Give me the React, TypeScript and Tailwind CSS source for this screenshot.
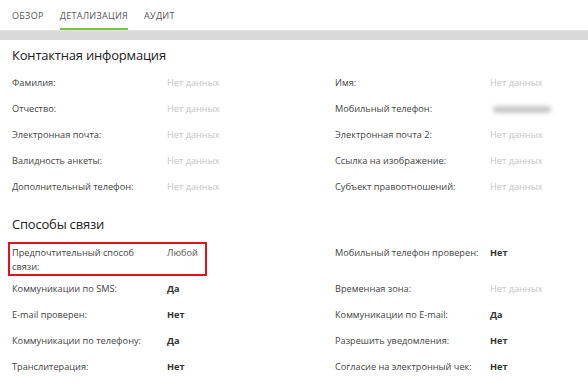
import React from "react";

const F = { fontFamily: '"Open Sans", "Noto Sans", sans-serif' };

type Row = { label: string; value: string; kind?: "empty" | "bold" | "plain" | "blur" };

function Val({ r }: { r: Row }) {
  if (r.kind === "blur")
    return (
      <div className="pt-[1px]">
        <div className="h-[7px] w-[58px] ml-[3px] rounded-full bg-[#c8c8c8] blur-[2px]" />
      </div>
    );
  if (r.kind === "bold") return <span className="font-bold text-[#333]">{r.value}</span>;
  if (r.kind === "plain") return <span className="text-[#555]">{r.value}</span>;
  return <span className="text-[#c4c4c4]">{r.value}</span>;
}

function Cell({ r, boxed }: { r: Row; boxed?: boolean }) {
  return (
    <div
      className={
        "flex text-[9.2px] leading-[14px] " +
        (boxed ? "h-[34px] -ml-[4px] pl-[2px] w-[199px] border-2 border-[#e5101b] pt-[2px]" : "h-[26px] items-center")
      }
    >
      <div className={"shrink-0 w-[155px] text-[#444] " + (boxed ? "pr-[25px]" : "")}>{r.label}</div>
      <div>
        <Val r={r} />
      </div>
    </div>
  );
}

export default function App() {
  const nd = "Нет данных";
  const left1: Row[] = [
    { label: "Фамилия:", value: nd },
    { label: "Отчество:", value: nd },
    { label: "Электронная почта:", value: nd },
    { label: "Валидность анкеты:", value: nd },
    { label: "Дополнительный телефон:", value: nd },
  ];
  const right1: Row[] = [
    { label: "Имя:", value: nd },
    { label: "Мобильный телефон:", value: "", kind: "blur" },
    { label: "Электронная почта 2:", value: nd },
    { label: "Ссылка на изображение:", value: nd },
    { label: "Субъект правоотношений:", value: nd },
  ];
  const left2: Row[] = [
    { label: "Коммуникации по SMS:", value: "Да", kind: "bold" },
    { label: "E-mail проверен:", value: "Нет", kind: "bold" },
    { label: "Коммуникации по телефону:", value: "Да", kind: "bold" },
    { label: "Транслитерация:", value: "Нет", kind: "bold" },
  ];
  const right2: Row[] = [
    { label: "Временная зона:", value: nd },
    { label: "Коммуникации по E-mail:", value: "Да", kind: "bold" },
    { label: "Разрешить уведомления:", value: "Нет", kind: "bold" },
    { label: "Согласие на электронный чек:", value: "Нет", kind: "bold" },
  ];

  return (
    <div style={F} className="w-[588px] h-[390px] bg-white overflow-hidden">
      <div className="flex h-[30px] px-[12px] gap-[16px] text-[9px] text-[#555] tracking-[0.3px]">
        <div className="flex items-center pt-[1px]">ОБЗОР</div>
        <div className="flex items-center pt-[3px] border-b-[2px] border-[#7dc243]">ДЕТАЛИЗАЦИЯ</div>
        <div className="flex items-center pt-[1px]">АУДИТ</div>
      </div>
      <div className="h-[10px] bg-[#d9d9d9] border-t border-[#e4e4e4]" />

      <div className="px-[12px]">
        <div className="mt-[4px] h-[22px] leading-[22px] text-[13px] tracking-[-0.2px] text-[#222]">Контактная информация</div>
        <div className="mt-[4px] grid grid-cols-[323px_1fr]">
          <div>
            {left1.map((r) => (
              <Cell key={r.label} r={r} />
            ))}
          </div>
          <div>
            {right1.map((r) => (
              <Cell key={r.label} r={r} />
            ))}
          </div>
        </div>

        <div className="mt-[13px] h-[22px] leading-[22px] text-[13px] tracking-[-0.2px] text-[#222]">Способы связи</div>
        <div className="mt-[7px] grid grid-cols-[323px_1fr]">
          <div>
            <Cell r={{ label: "Предпочтительный способ связи:", value: "Любой", kind: "plain" }} boxed />
            {left2.map((r) => (
              <Cell key={r.label} r={r} />
            ))}
          </div>
          <div>
            <div className="flex h-[34px] pt-[4px] text-[9.2px] leading-[14px]">
              <div className="w-[155px] shrink-0 text-[#444]">Мобильный телефон проверен:</div>
              <div className="font-bold text-[#333]">Нет</div>
            </div>
            {right2.map((r) => (
              <Cell key={r.label} r={r} />
            ))}
          </div>
        </div>
      </div>
    </div>
  );
}
